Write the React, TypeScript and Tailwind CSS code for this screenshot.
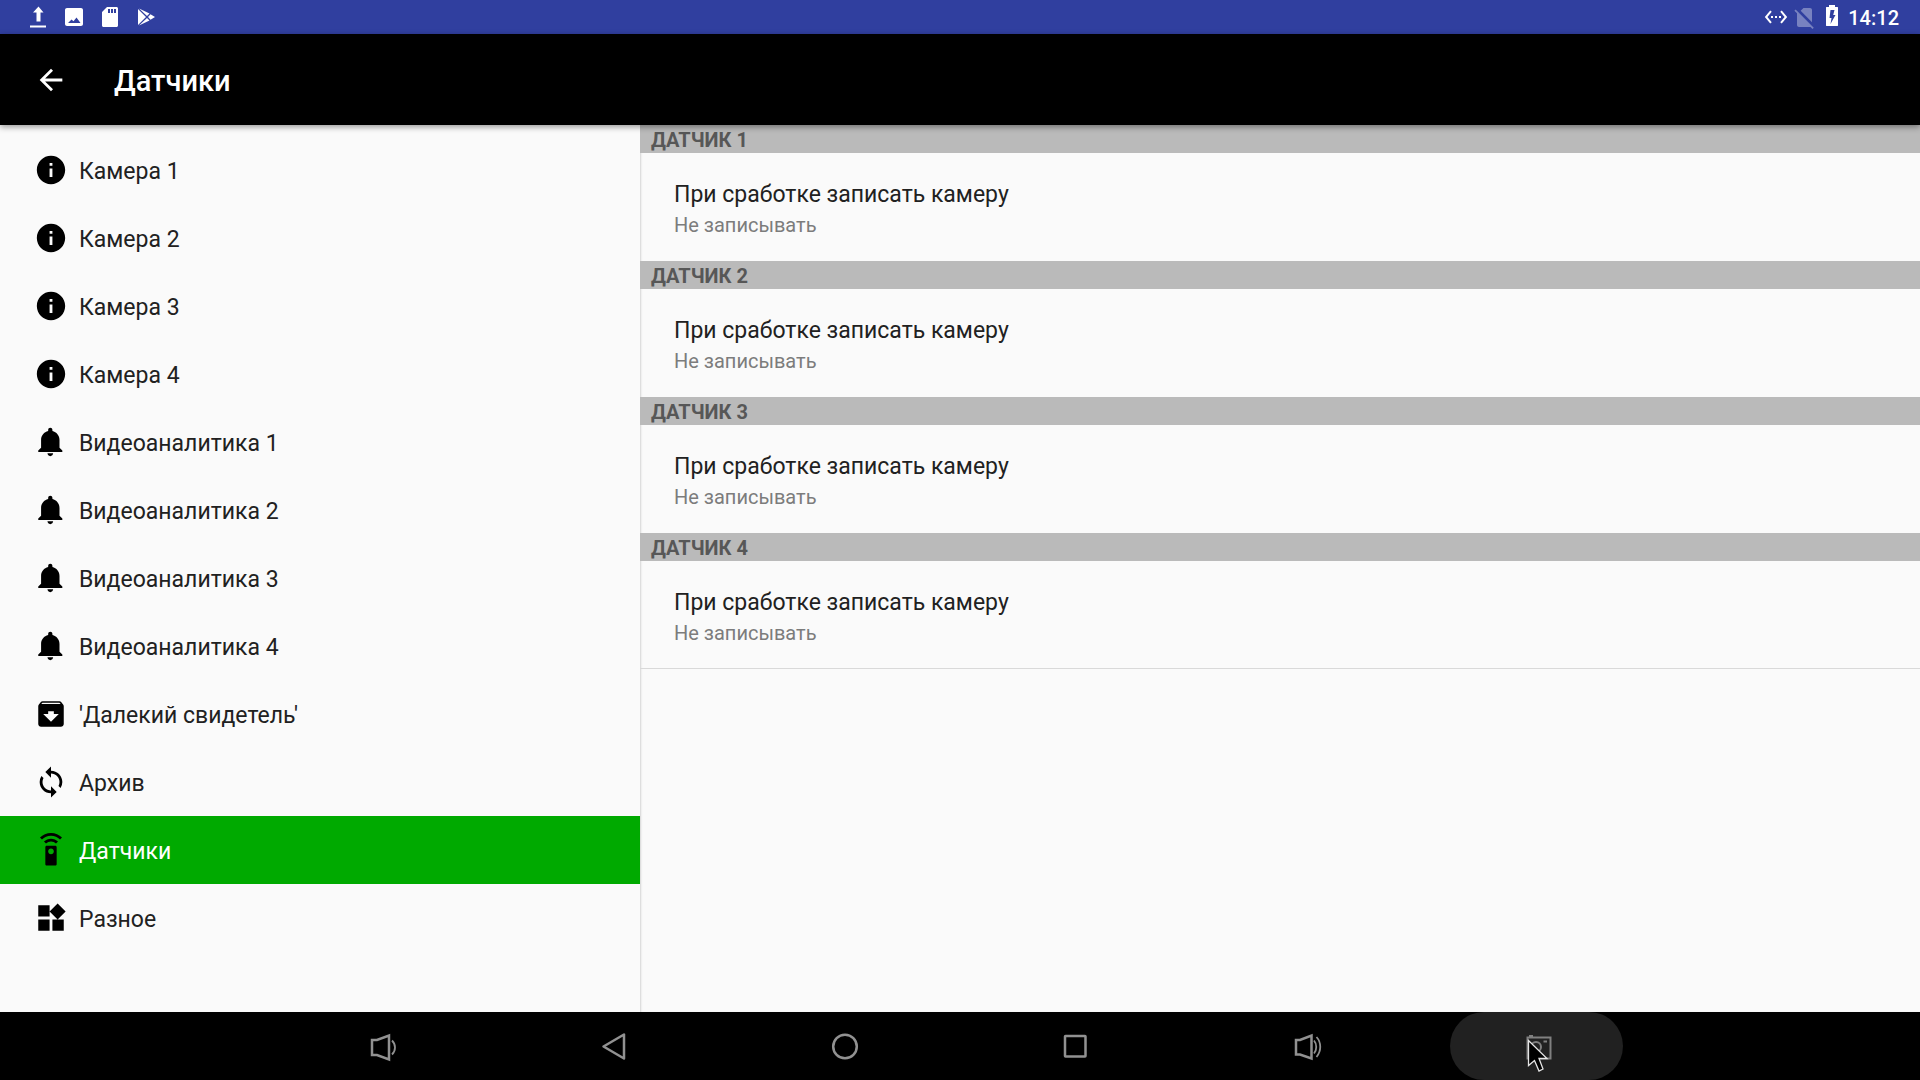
import type { ReactNode } from 'react'
import type { IconType } from 'react-icons'
import { MdArchive, MdArrowBack, MdInfo, MdSettingsRemote, MdSync, MdWidgets } from 'react-icons/md'

const BellIcon = ({ className }: { className?: string }) => (
  <svg viewBox="0 0 24 24" fill="currentColor" className={className}>
    <path d="M11.5 22c1.1 0 2-.9 2-2h-4c0 1.1.9 2 2 2zm6.5-6v-5.5c0-3.07-2.13-5.64-5-6.32V3.5c0-.83-.67-1.5-1.5-1.5S10 2.67 10 3.5v.68c-2.87.68-5 3.25-5 6.32V16l-2 2v1h17v-1l-2-2z" />
  </svg>
)

interface MenuItem {
  label: string
  icon: IconType | typeof BellIcon
}

const menu: MenuItem[] = [
  { label: 'Камера 1', icon: MdInfo },
  { label: 'Камера 2', icon: MdInfo },
  { label: 'Камера 3', icon: MdInfo },
  { label: 'Камера 4', icon: MdInfo },
  { label: 'Видеоаналитика 1', icon: BellIcon },
  { label: 'Видеоаналитика 2', icon: BellIcon },
  { label: 'Видеоаналитика 3', icon: BellIcon },
  { label: 'Видеоаналитика 4', icon: BellIcon },
  { label: "'Далекий свидетель'", icon: MdArchive },
  { label: 'Архив', icon: MdSync },
  { label: 'Датчики', icon: MdSettingsRemote },
  { label: 'Разное', icon: MdWidgets },
]

const active = 'Датчики'
const sensors = ['ДАТЧИК 1', 'ДАТЧИК 2', 'ДАТЧИК 3', 'ДАТЧИК 4']

const StatusBar = () => (
  <div className="flex h-[34px] shrink-0 items-center justify-between bg-[#303f9f] pl-[26px] pr-[21px] text-white">
    <div className="flex items-center gap-3">
      <svg viewBox="0 0 24 24" fill="currentColor" className="size-6">
        <path d="M12.5 1.5 17.500 7.500H14.500v9h-4v-9H7zM4 20.500h16v2H4z" />
      </svg>
      <svg viewBox="0 0 24 24" fill="currentColor" className="size-6">
        <path d="M21 19V5c0-1.100-.9-2-2-2H5c-1.100 0-2 .9-2 2v14c0 1.100.9 2 2 2h14c1.100 0 2-.9 2-2zM9.500 14.500l2 1.800L14.500 12.500l4 5.500H6z" />
      </svg>
      <svg viewBox="0 0 24 24" fill="currentColor" className="size-6">
        <path d="M18.500 2H9L4 7v13.500C4 21.300 4.700 22 5.500 22h13c.8 0 1.500-.7 1.500-1.500v-17c0-.8-.7-1.500-1.500-1.500zM12 8h-2V4h2zm3 0h-2V4h2zm3 0h-2V4h2z" />
      </svg>
      <svg viewBox="0 0 24 24" fill="currentColor" className="size-6">
        <path d="M4 4v16l8-8zM5 3.500l8 7.500 2.500-2.500zM5 20.500l8-7.500 2.500 2.500zM14 12l2.500-2.800L21 12l-4.500 2.800z" />
      </svg>
    </div>
    <div className="flex items-center">
      <svg viewBox="0 0 24 24" fill="currentColor" className="size-6">
        <path d="M7.770 6.760 6.230 5.480.82 12l5.410 6.520 1.540-1.280L3.420 12l4.350-5.240zM7 13h2v-2H7v2zm10-2h-2v2h2v-2zm-6 2h2v-2h-2v2zm6.770-7.520-1.540 1.280L20.580 12l-4.350 5.240 1.540 1.280L23.180 12l-5.410-6.520z" />
      </svg>
      <svg viewBox="0 0 24 24" fill="currentColor" className="ml-1 size-6 opacity-35">
        <path d="M20 5c0-1.100-.9-2-2-2h-6.500L8.650 5.840 20 17.190zM3.650 4.380 2.380 5.650 5 8.270V20c0 1.100.9 2 2 2h11.500l2 2 1.270-1.270z" />
      </svg>
      <svg viewBox="0 0 24 24" fill="currentColor" className="ml-1 size-6">
        <path d="M17.500 2H15V0H9v2H6.500c-.3 0-.5.2-.5.500v18c0 .3.200.5.500.5h11c.3 0 .5-.2.500-.5v-18c0-.3-.2-.5-.5-.5zM10.500 19l1-6H9.500l1-8h4l-1.300 5H15.500z" />
      </svg>
      <span className="ml-1 pt-0.5 text-[20px] leading-8 font-medium">14:12</span>
    </div>
  </div>
)

const AppBar = () => (
  <header className="z-10 flex h-[91px] shrink-0 items-center bg-black pl-[34px] text-white shadow-[0_2px_6px_0_rgba(0,0,0,0.4)]">
    <button aria-label="Назад" className="flex size-[34px] items-center justify-center">
      <MdArrowBack className="size-[34px]" />
    </button>
    <h1 className="ml-[46px] pt-0.5 text-[29px] leading-9 font-medium">{active}</h1>
  </header>
)

const SideMenu = () => (
  <nav className="w-1/3 shrink-0 pt-[11px]">
    <ul>
      {menu.map(({ label, icon: Icon }) => (
        <li key={label}>
          <a
            href="#"
            className={`flex h-[68px] items-center gap-[11px] pl-[34px] text-[23px] ${label === active ? 'bg-[#00aa00] text-white' : 'text-[#212121]'}`}
          >
            <Icon className="size-[34px] text-black" />
            <span className="pt-1">{label}</span>
          </a>
        </li>
      ))}
    </ul>
  </nav>
)

const SensorList = () => (
  <main className="flex-1 shadow-[inset_2px_0_2px_-1px_rgba(0,0,0,0.15)]">
    {sensors.map((name) => (
      <section key={name}>
        <h2 className="h-7 bg-[#bababa] pl-[11px] text-[20px] leading-[30px] font-bold text-[#575757]">{name}</h2>
        <button className="flex h-[108px] w-full flex-col justify-center pt-[5px] pl-[34px] text-left">
          <span className="text-[23px] leading-[30px] text-[#212121]">При сработке записать камеру</span>
          <span className="text-[20px] leading-[30px] text-[#7c7c7c]">Не записывать</span>
        </button>
      </section>
    ))}
    <hr className="-mt-px border-[#d9d9d9]" />
  </main>
)

const NavButton = ({ label, pressed, children }: { label: string; pressed?: boolean; children: ReactNode }) => (
  <button
    aria-label={label}
    className={`relative flex h-full w-3/4 items-center justify-center justify-self-center rounded-full ${pressed ? 'bg-[#212121]' : ''}`}
  >
    <svg viewBox="0 0 34 34" fill="none" stroke="#919191" strokeWidth="2.500" className="size-[34px]">
      {children}
    </svg>
    {pressed && (
      <svg viewBox="0 0 22 34" className="absolute top-[27px] left-[77px] h-[34px] w-[22px]">
        <path d="M1.500 1.500v25l6-5 4.500 10.500 4-2-4-10.500h8z" fill="#000" stroke="#e5e5e5" strokeWidth="1.300" />
      </svg>
    )}
  </button>
)

const SystemNav = () => (
  <footer className="grid h-[68px] shrink-0 grid-cols-6 bg-black px-67">
    <NavButton label="Тише">
      <path d="M6 11h5l12-4.500v24L11 26H6z" />
      <path d="M26 11.500c4 4 4 10 0 14" strokeWidth="1.800" />
    </NavButton>
    <NavButton label="Назад">
      <path d="M27 5.500v24L6.500 17.500z" strokeLinejoin="round" />
    </NavButton>
    <NavButton label="Домой">
      <circle cx="17" cy="17.500" r="11.800" />
    </NavButton>
    <NavButton label="Обзор">
      <rect x="7" y="7" width="20.500" height="20.500" rx=".5" />
    </NavButton>
    <NavButton label="Громче">
      <path d="M7 11h4l11.500-4.500v23L11 25.500H7z" />
      <path d="M25 11.500c3 3.500 3 9.500 0 13M27.500 8c5 5.500 5 14 0 20" strokeWidth="1.800" />
    </NavButton>
    <NavButton label="Снимок экрана" pressed>
      <path d="M7.500 8.500h23v21h-23zM9 7h4M23.500 12.500H27" stroke="#808080" strokeWidth="2" />
      <circle cx="16" cy="18" r="5" stroke="#808080" strokeWidth="2" />
    </NavButton>
  </footer>
)

export default function App() {
  return (
    <div className="flex min-h-screen flex-col bg-[#fafafa] font-['Roboto',sans-serif]">
      <StatusBar />
      <AppBar />
      <div className="flex flex-1">
        <SideMenu />
        <SensorList />
      </div>
      <SystemNav />
    </div>
  )
}
